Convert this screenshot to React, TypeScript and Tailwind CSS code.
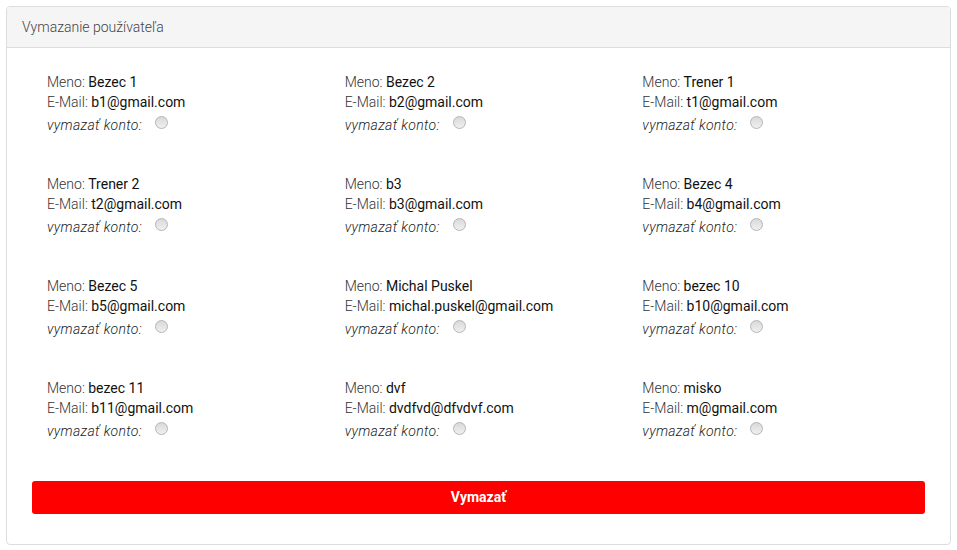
import React from "react";

const users = [
  ["Bezec 1", "b1@gmail.com"],
  ["Bezec 2", "b2@gmail.com"],
  ["Trener 1", "t1@gmail.com"],
  ["Trener 2", "t2@gmail.com"],
  ["b3", "b3@gmail.com"],
  ["Bezec 4", "b4@gmail.com"],
  ["Bezec 5", "b5@gmail.com"],
  ["Michal Puskel", "michal.puskel@gmail.com"],
  ["bezec 10", "b10@gmail.com"],
  ["bezec 11", "b11@gmail.com"],
  ["dvf", "dvdfvd@dfvdvf.com"],
  ["misko", "m@gmail.com"],
];

export default function App() {
  return (
    <div className="w-[957px] h-[550px] bg-white pt-[6px] pl-[6px]" style={{ fontFamily: "Roboto, 'Liberation Sans', sans-serif" }}>
      <div className="w-[945px] h-[539px] border border-[#dddddd] rounded-[4px] flex flex-col overflow-hidden">
        <div className="h-[41px] bg-[#f5f5f5] border-b border-[#dddddd] flex items-center pl-[15px] text-[14px] font-light text-[#444444]">
          Vymazanie používateľa
        </div>
        <div className="px-[25px] pt-[24px]">
          <div className="grid grid-cols-3">
            {users.map(([name, mail]) => (
              <div key={mail} className="h-[102px] pl-[15px] text-[14px] text-[#333333] leading-[20px]">
                <div>
                  <span className="font-light">Meno: </span>
                  <span className="font-normal text-[#111]">{name}</span>
                </div>
                <div>
                  <span className="font-light">E-Mail: </span>
                  <span className="font-normal text-[#111]">{mail}</span>
                </div>
                <div className="h-[26px] flex items-center">
                  <span className="italic font-light text-[#222] tracking-[0.3px]">vymazať konto:</span>
                  <span className="ml-[13px] -mt-[6px] w-[13px] h-[13px] rounded-full border border-[#b5b5b5] bg-gradient-to-b from-[#d9d9d9] to-[#f0f0f0]" />
                </div>
              </div>
            ))}
          </div>
          <div className="mt-[1px] h-[33px] bg-[#ff0000] rounded-[3px] flex items-center justify-center text-white font-bold text-[14px]">
            Vymazať
          </div>
        </div>
      </div>
    </div>
  );
}
